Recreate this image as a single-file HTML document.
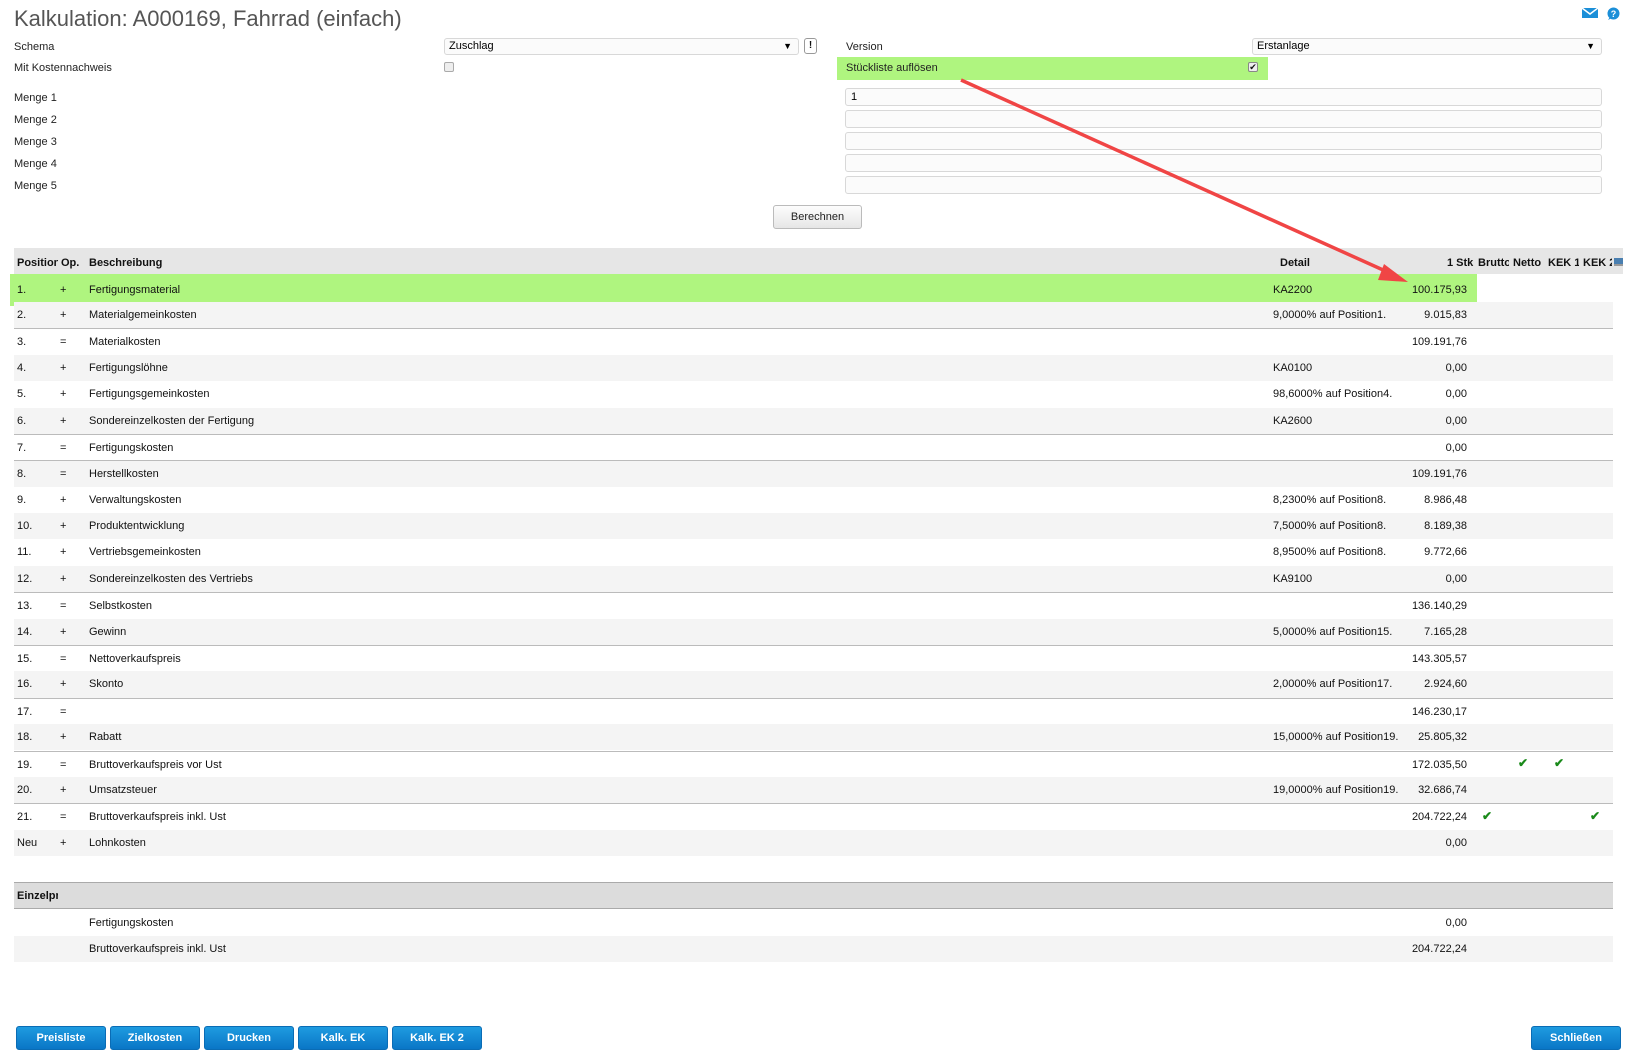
<!DOCTYPE html>
<html><head><meta charset="utf-8">
<style>
*{box-sizing:border-box;margin:0;padding:0}
body{width:1638px;height:1053px;background:#fff;font-family:"Liberation Sans",Arial,sans-serif;font-size:11px;color:#111;position:relative;overflow:hidden}
.a{position:absolute}
.lbl{position:absolute;left:14px;font-size:11px;color:#222}
.inp{position:absolute;border:1px solid #d8d8d8;border-radius:3px;background:#fbfbfb;height:18px}
.row{position:absolute;left:14px;width:1599px;height:26.38px;line-height:26px}
.row.g{background:#f4f4f4}
.row.t{border-top:1px solid #bbb}
.row span{position:absolute;white-space:nowrap}
.p{left:3px}.o{left:46px}.d{left:75px}.de{left:1259px}.am{right:146px;text-align:right}
.btn{position:absolute;top:1026px;height:24px;width:90px;background:linear-gradient(#1e9be0,#0a76c6);border:1px solid #0a6cb5;border-radius:3px;color:#fff;font-weight:bold;text-align:center;line-height:22px;font-size:11px}
.ck{position:absolute;color:#1a8a1a;font-size:12px;font-weight:bold}
</style></head><body>
<div class="a" style="left:14px;top:6px;font-size:22px;color:#555">Kalkulation: A000169, Fahrrad (einfach)</div>
<svg class="a" style="left:1582px;top:8px" width="16" height="10" viewBox="0 0 16 10"><rect width="16" height="10" fill="#1b8fd8"/><path d="M0 0 L8 6 L16 0" stroke="#fff" stroke-width="1.5" fill="none"/></svg>
<svg class="a" style="left:1606px;top:7px" width="14" height="14" viewBox="0 0 14 14"><circle cx="7.5" cy="6.5" r="6" fill="#1b8fd8"/><path d="M2 13 L4 10 L6 11 Z" fill="#1b8fd8"/><text x="7.5" y="10" font-size="9" font-weight="bold" fill="#fff" text-anchor="middle" font-family="Liberation Sans">?</text></svg>

<div class="lbl" style="top:41px">Schema</div>
<div class="lbl" style="top:62px">Mit Kostennachweis</div>
<div class="lbl" style="top:92px">Menge 1</div>
<div class="lbl" style="top:114px">Menge 2</div>
<div class="lbl" style="top:136px">Menge 3</div>
<div class="lbl" style="top:158px">Menge 4</div>
<div class="lbl" style="top:180px">Menge 5</div>

<div class="inp" style="left:444px;top:38px;width:355px;height:17px;line-height:15px;padding-left:4px;color:#000">Zuschlag<span style="position:absolute;right:6px;font-size:9px">▼</span></div>
<div class="inp" style="left:804px;top:38px;width:13px;height:16px;line-height:14px;text-align:center;font-weight:bold;font-size:10px;background:#fff;border-color:#999">!</div>
<div class="inp" style="left:444px;top:62px;width:10px;height:10px;border-radius:2px;background:#eee;border-color:#aaa"></div>

<div class="lbl" style="left:846px;top:41px">Version</div>
<div class="inp" style="left:1252px;top:38px;width:350px;height:17px;line-height:15px;padding-left:4px;color:#000">Erstanlage<span style="position:absolute;right:6px;font-size:9px">▼</span></div>
<div class="a" style="left:837px;top:57px;width:431px;height:23px;background:#aff57f"></div>
<div class="lbl" style="left:846px;top:62px">Stückliste auflösen</div>
<div class="inp" style="left:1248px;top:62px;width:10px;height:10px;border-radius:2px;background:#eee;border-color:#888;font-size:9px;line-height:8px;text-align:center">✔</div>

<div class="inp" style="left:845px;top:88px;width:757px;padding-left:5px;line-height:16px;color:#000">1</div>
<div class="inp" style="left:845px;top:110px;width:757px"></div>
<div class="inp" style="left:845px;top:132px;width:757px"></div>
<div class="inp" style="left:845px;top:154px;width:757px"></div>
<div class="inp" style="left:845px;top:176px;width:757px"></div>

<div class="a" style="left:773px;top:205px;width:89px;height:24px;border:1px solid #bbb;border-radius:3px;background:linear-gradient(#fdfdfd,#e6e6e6);text-align:center;line-height:23px;color:#222">Berechnen</div>

<div class="a" style="left:14px;top:248px;width:1609px;height:26px;background:#e6e6e6;font-weight:bold;line-height:31px">
<span class="a" style="left:3px;width:41px;overflow:hidden;white-space:nowrap">Position</span>
<span class="a" style="left:47px">Op.</span>
<span class="a" style="left:75px">Beschreibung</span>
<span class="a" style="left:1266px">Detail</span>
<span class="a" style="left:1433px">1 Stk</span>
<span class="a" style="left:1464px;width:31px;overflow:hidden;white-space:nowrap">Brutto</span>
<span class="a" style="left:1499px">Netto</span>
<span class="a" style="left:1534px;width:31px;overflow:hidden;white-space:nowrap">KEK 1</span>
<span class="a" style="left:1569px;width:29px;overflow:hidden;white-space:nowrap">KEK 2</span>
<span class="a" style="left:1600px;top:10px;width:9px;height:8px;background:#4a7fb0;border-bottom:2px solid #999"></span>
</div>

<div class="a" style="left:10px;top:274px;width:1467px;height:32px;background:#aff57f"></div>
<div class="row" style="top:277px;background:transparent"><span class="p">1.</span><span class="o">+</span><span class="d">Fertigungsmaterial</span><span class="de">KA2200</span><span class="am">100.175,93</span></div>

<div class="row g" style="top:302px"><span class="p">2.</span><span class="o">+</span><span class="d">Materialgemeinkosten</span><span class="de">9,0000% auf Position1.</span><span class="am">9.015,83</span></div>
<div class="row t" style="top:328.4px"><span class="p">3.</span><span class="o">=</span><span class="d">Materialkosten</span><span class="am">109.191,76</span></div>
<div class="row g" style="top:354.8px"><span class="p">4.</span><span class="o">+</span><span class="d">Fertigungslöhne</span><span class="de">KA0100</span><span class="am">0,00</span></div>
<div class="row" style="top:381.1px"><span class="p">5.</span><span class="o">+</span><span class="d">Fertigungsgemeinkosten</span><span class="de">98,6000% auf Position4.</span><span class="am">0,00</span></div>
<div class="row g" style="top:407.5px"><span class="p">6.</span><span class="o">+</span><span class="d">Sondereinzelkosten der Fertigung</span><span class="de">KA2600</span><span class="am">0,00</span></div>
<div class="row t" style="top:433.9px"><span class="p">7.</span><span class="o">=</span><span class="d">Fertigungskosten</span><span class="am">0,00</span></div>
<div class="row g t" style="top:460.3px"><span class="p">8.</span><span class="o">=</span><span class="d">Herstellkosten</span><span class="am">109.191,76</span></div>
<div class="row" style="top:486.7px"><span class="p">9.</span><span class="o">+</span><span class="d">Verwaltungskosten</span><span class="de">8,2300% auf Position8.</span><span class="am">8.986,48</span></div>
<div class="row g" style="top:513px"><span class="p">10.</span><span class="o">+</span><span class="d">Produktentwicklung</span><span class="de">7,5000% auf Position8.</span><span class="am">8.189,38</span></div>
<div class="row" style="top:539.4px"><span class="p">11.</span><span class="o">+</span><span class="d">Vertriebsgemeinkosten</span><span class="de">8,9500% auf Position8.</span><span class="am">9.772,66</span></div>
<div class="row g" style="top:565.8px"><span class="p">12.</span><span class="o">+</span><span class="d">Sondereinzelkosten des Vertriebs</span><span class="de">KA9100</span><span class="am">0,00</span></div>
<div class="row t" style="top:592.2px"><span class="p">13.</span><span class="o">=</span><span class="d">Selbstkosten</span><span class="am">136.140,29</span></div>
<div class="row g" style="top:618.6px"><span class="p">14.</span><span class="o">+</span><span class="d">Gewinn</span><span class="de">5,0000% auf Position15.</span><span class="am">7.165,28</span></div>
<div class="row t" style="top:644.9px"><span class="p">15.</span><span class="o">=</span><span class="d">Nettoverkaufspreis</span><span class="am">143.305,57</span></div>
<div class="row g" style="top:671.3px"><span class="p">16.</span><span class="o">+</span><span class="d">Skonto</span><span class="de">2,0000% auf Position17.</span><span class="am">2.924,60</span></div>
<div class="row t" style="top:697.7px"><span class="p">17.</span><span class="o">=</span><span class="am">146.230,17</span></div>
<div class="row g" style="top:724.1px"><span class="p">18.</span><span class="o">+</span><span class="d">Rabatt</span><span class="de">15,0000% auf Position19.</span><span class="am">25.805,32</span></div>
<div class="row t" style="top:750.5px"><span class="p">19.</span><span class="o">=</span><span class="d">Bruttoverkaufspreis vor Ust</span><span class="am">172.035,50</span></div>
<div class="row g" style="top:776.8px"><span class="p">20.</span><span class="o">+</span><span class="d">Umsatzsteuer</span><span class="de">19,0000% auf Position19.</span><span class="am">32.686,74</span></div>
<div class="row t" style="top:803.2px"><span class="p">21.</span><span class="o">=</span><span class="d">Bruttoverkaufspreis inkl. Ust</span><span class="am">204.722,24</span></div>
<div class="row g" style="top:829.6px"><span class="p">Neu</span><span class="o">+</span><span class="d">Lohnkosten</span><span class="am">0,00</span></div>

<div class="ck" style="left:1518px;top:756px">✔</div>
<div class="ck" style="left:1554px;top:756px">✔</div>
<div class="ck" style="left:1482px;top:809px">✔</div>
<div class="ck" style="left:1590px;top:809px">✔</div>

<div class="a" style="left:14px;top:882px;width:1599px;height:27px;background:#dcdcdc;border-top:1px solid #aaa;border-bottom:1px solid #aaa;font-weight:bold;line-height:27px"><span class="a" style="left:3px;width:41px;overflow:hidden;white-space:nowrap">Einzelpreis</span></div>
<div class="row" style="top:910px"><span class="d">Fertigungskosten</span><span class="am">0,00</span></div>
<div class="row g" style="top:936px"><span class="d">Bruttoverkaufspreis inkl. Ust</span><span class="am">204.722,24</span></div>

<svg class="a" style="left:0;top:0" width="1638" height="400" viewBox="0 0 1638 400">
<line x1="961" y1="80" x2="1392" y2="274" stroke="#f04545" stroke-width="3.5"/>
<polygon points="1408,282 1384,264 1378,280" fill="#f04545"/>
</svg>

<div class="btn" style="left:16px">Preisliste</div>
<div class="btn" style="left:110px">Zielkosten</div>
<div class="btn" style="left:204px">Drucken</div>
<div class="btn" style="left:298px">Kalk. EK</div>
<div class="btn" style="left:392px">Kalk. EK 2</div>
<div class="btn" style="left:1531px">Schließen</div>
</body></html>
